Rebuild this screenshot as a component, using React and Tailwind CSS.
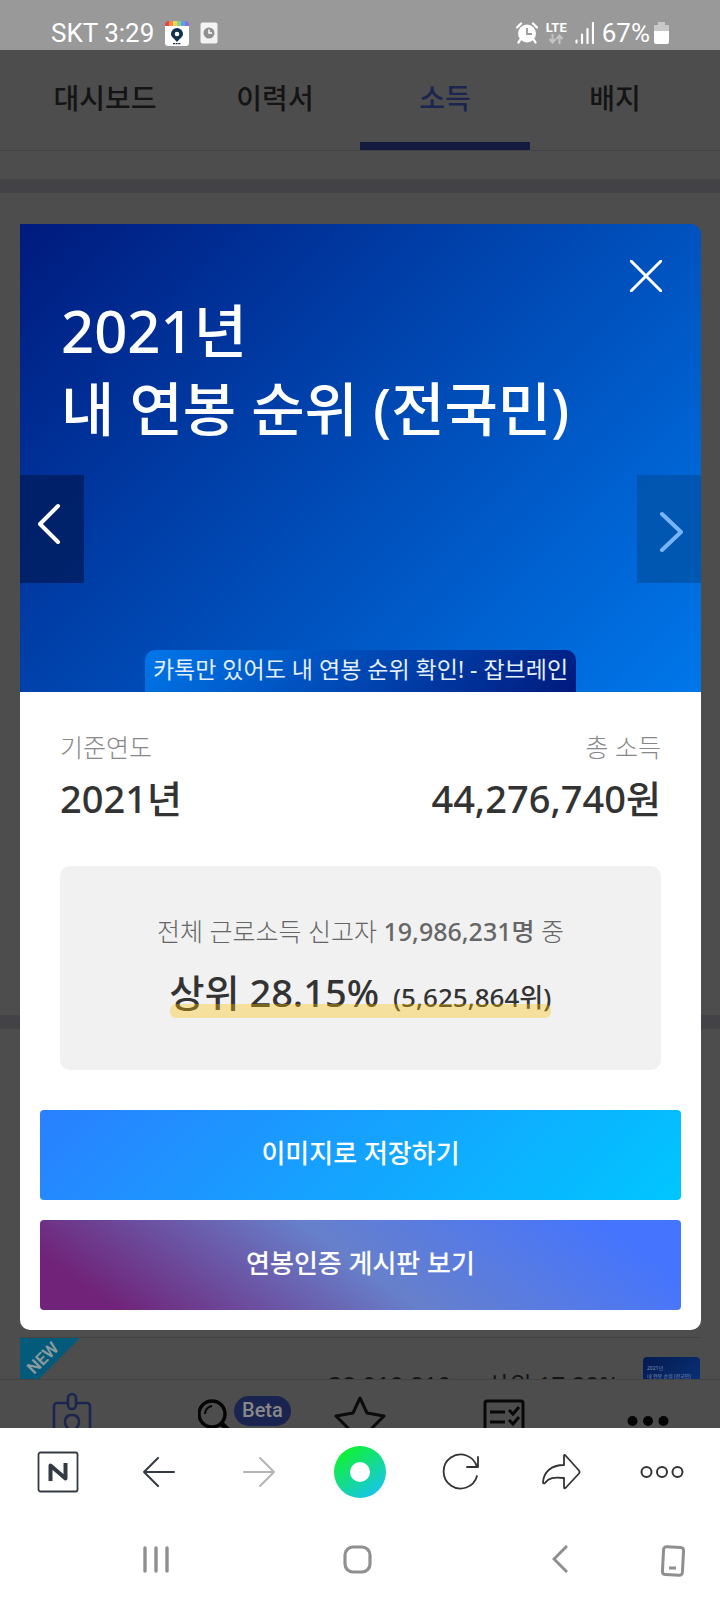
import React, { useState } from 'react';

const tabs = ['대시보드', '이력서', '소득', '배지'];

const StatusBar = () => (
  <header className="flex h-[50px] items-end justify-between bg-[#999] px-[51px] pb-[2px] font-['Roboto','Noto_Sans_CJK_KR',sans-serif] text-[26px] leading-[30px] text-white">
    <div className="flex items-center">
      <span>SKT 3:29</span>
      <svg className="ml-[10px] h-[26px] w-[26px]" viewBox="0 0 26 26">
        <rect x="1" y="4" width="24" height="22" rx="3" fill="#fff" />
        <path d="M1 6V4a4 4 0 0 1 4-3v5z" fill="#e04848" />
        <path d="M5 1h4v5H5z" fill="#ef8a4a" />
        <path d="M9 1h4v5H9z" fill="#efd25a" />
        <path d="M13 1h4v5h-4z" fill="#8fd07a" />
        <path d="M17 1h4v5h-4z" fill="#5aa0f0" />
        <path d="M21 1a4 4 0 0 1 4 3v2h-4z" fill="#8a70e0" />
        <path d="M13 8a6 6 0 0 0-6 6c0 3 3 4 6 8 3-4 6-5 6-8a6 6 0 0 0-6-6z" fill="#12304c" />
        <circle cx="13" cy="14" r="2.3" fill="#fff" />
        <path d="M9 23.6h8" stroke="#12304c" strokeWidth="1.4" strokeDasharray="2 .6" />
      </svg>
      <svg className="ml-[10px] h-[22px] w-[18px]" viewBox="0 0 18 22">
        <rect width="17" height="21" x=".5" y=".5" rx="2" fill="#f3f3f3" />
        <circle cx="9" cy="11" r="5.5" fill="#909090" />
        <path d="M9 7.5V11h3" stroke="#fff" strokeWidth="1.5" fill="none" />
      </svg>
    </div>
    <div className="flex items-center">
      <svg className="h-[22px] w-[22px]" viewBox="0 0 22 22">
        <circle cx="11" cy="11.5" r="9" fill="#fff" />
        <path d="M1 5.5L5 1.5M21 5.5L17 1.5M4 18L2.5 20.5M18 18l1.5 2.5" stroke="#fff" strokeWidth="2.4" strokeLinecap="round" />
        <path d="M11 6v6h5" stroke="#999" strokeWidth="1.8" fill="none" />
      </svg>
      <div className="ml-2 flex flex-col items-center">
        <span className="text-[13px] leading-[12px] font-bold">LTE</span>
        <svg className="h-[10px] w-[16px]" viewBox="0 0 16 10">
          <path d="M4.5 0v8M1.5 5l3 3.5 3-3.5M11.5 10V2M8.5 5l3-3.5 3 3.5" stroke="#c4c4c4" strokeWidth="2" fill="none" />
        </svg>
      </div>
      <svg className="ml-2 h-[22px] w-[19px]" viewBox="0 0 19 22">
        <path d="M1.5 18.5v2M7 12.5V21M12.5 7v14M18 1v20" stroke="#fff" strokeWidth="2.2" strokeLinecap="round" />
      </svg>
      <span className="ml-2">67%</span>
      <svg className="ml-1 h-[22px] w-[15px]" viewBox="0 0 15 22">
        <path d="M4 0h7v3h3a1 1 0 0 1 1 1v5H0V4a1 1 0 0 1 1-1h3z" fill="#c8c8c8" />
        <path d="M0 9h15v11a2 2 0 0 1-2 2H2a2 2 0 0 1-2-2z" fill="#fff" />
      </svg>
    </div>
  </header>
);

// モーダルの後ろにある暗くなったページ
const DimmedPage = () => (
  <div className="absolute inset-0 flex flex-col overflow-hidden bg-[#4d4d4d]">
    <nav className="grid h-[101px] shrink-0 grid-cols-4 border-b border-[#424246] px-5">
      {tabs.map(t => (
        <a
          key={t}
          href="#"
          className={`flex justify-center border-b-8 pt-7 text-[28px] leading-[40px] font-medium ${
            t === '소득' ? 'border-[#141b3e] text-[#1b254f]' : 'border-transparent text-[#141414]'
          }`}
        >
          {t}
        </a>
      ))}
    </nav>
    <div className="mt-7 h-[14px] shrink-0 bg-[#434347]" />
    <div className="flex-1" />
    <div className="h-[14px] shrink-0 bg-[#434347]" />
    <div className="h-[308px] shrink-0" />
    <div className="mx-5 flex h-[42px] shrink-0 overflow-hidden border-t border-[#444]">
      <svg className="h-[60px] w-[60px] shrink-0" viewBox="0 0 60 60">
        <path d="M0 0h60L0 60z" fill="#035a7a" />
        <text x="0" y="0" transform="translate(14 37) rotate(-45)" fontSize="17" fontWeight="600" fontFamily="Roboto, sans-serif" fill="#8a9a9f">NEW</text>
      </svg>
      <div className="mt-7 mr-6 flex flex-1 justify-end gap-9 text-[24px] leading-[38px] text-[#141414]">
        <span>38,919,810</span>
        <span>상위 17.88%</span>
      </div>
      <div className="mt-[19px] h-14 w-[57px] overflow-hidden rounded bg-linear-to-br from-[#051a50] to-[#083a85] px-1 pt-[7px] text-[5px] leading-[8px] whitespace-nowrap text-[#8090b0]">
        2021년
        <br />내 연봉 순위 (전국민)
      </div>
    </div>
    <nav className="grid h-[49px] shrink-0 grid-cols-5 overflow-hidden border-t border-[#424242]">
      <a href="#" aria-label="홈" className="flex justify-center pt-3">
        <svg className="h-[52px] w-[40px]" viewBox="0 0 40 52" fill="none" stroke="#1c2550" strokeWidth="2.6">
          <path d="M15 11H5a3 3 0 0 0-3 3v36h36V14a3 3 0 0 0-3-3H25" />
          <rect x="16" y="2" width="8" height="15" rx="4" />
          <path d="M20 23c-5 0-7 3-7 7s3 8 7 8 7-4 7-8-2-7-7-7z" />
        </svg>
      </a>
      <a href="#" className="relative flex justify-center pt-[14px]">
        <svg className="mt-1 h-[40px] w-[36px]" viewBox="0 0 36 40" fill="none" stroke="#050505" strokeWidth="3.4">
          <circle cx="14" cy="16" r="13" />
          <path d="M7 16a8 8 0 0 1 7-8" strokeWidth="2" />
          <path d="M24 26l9 9" strokeWidth="5" />
        </svg>
        <span className="absolute top-4 left-[90px] h-[30px] rounded-full bg-[#1a2450] px-2 font-['Roboto',sans-serif] text-[20px] leading-[28px] font-medium text-[#888]">Beta</span>
      </a>
      <a href="#" aria-label="즐겨찾기" className="flex justify-center pt-4">
        <svg className="h-[50px] w-[52px]" viewBox="0 0 52 50" fill="none" stroke="#0c0c0c" strokeWidth="3" strokeLinejoin="round">
          <path d="M26 2l7 15 17 3-12 12 3 16-15-7-15 7 3-16L2 20l17-3z" />
        </svg>
      </a>
      <a href="#" aria-label="목록" className="flex justify-center pt-[19px]">
        <svg className="h-[44px] w-[42px]" viewBox="0 0 42 44" fill="none" stroke="#080808" strokeWidth="3">
          <rect x="2" y="2" width="38" height="40" rx="2" />
          <path d="M7 13h15M7 23h15M26 11l4 4 6-7M26 21l4 4 6-7" />
        </svg>
      </a>
      <a href="#" aria-label="더보기" className="flex justify-center pt-9">
        <svg className="h-[10px] w-[42px]" viewBox="0 0 42 10" fill="#050505">
          <circle cx="5.5" cy="5" r="5" />
          <circle cx="21" cy="5" r="5" />
          <circle cx="36.5" cy="5" r="5" />
        </svg>
      </a>
    </nav>
  </div>
);

const RankModal = ({ onClose }) => (
  <section role="dialog" aria-label="내 연봉 순위" className="relative mt-[174px] mr-[19px] mb-[97px] ml-5">
    <div className="relative flex min-h-[468px] flex-col justify-between rounded-tr-[10px] bg-linear-[135deg] from-[#001a7d] via-[#004ab5] to-[#0077ea]">
      <button onClick={onClose} aria-label="닫기" className="absolute top-9 right-[39px]">
        <svg className="h-8 w-8" viewBox="0 0 32 32" stroke="#fff" strokeWidth="3" strokeLinecap="round">
          <path d="M1 1l30 30M31 1L1 31" />
        </svg>
      </button>
      <h1 className="px-[41px] pt-[68px] text-[58px] leading-[78px] font-medium text-white">
        2021년
        <br />내 연봉 순위 (전국민)
      </h1>
      <button aria-label="이전" className="absolute top-[251px] left-0 flex h-[108px] w-16 justify-center bg-[#001d5e]/80 pt-7 pr-1">
        <svg className="h-[42px] w-6" viewBox="0 0 24 42" fill="none" stroke="#fff" strokeWidth="4" strokeLinecap="round" strokeLinejoin="round">
          <path d="M20 3L2 21l18 18" />
        </svg>
      </button>
      <button aria-label="다음" className="absolute top-[251px] right-0 flex h-[108px] w-16 justify-end bg-[#0052a8]/80 pt-9 pr-[18px]">
        <svg className="h-[42px] w-6" viewBox="0 0 24 42" fill="none" stroke="#77b4fa" strokeWidth="4" strokeLinecap="round" strokeLinejoin="round">
          <path d="M3 3l19 18L3 39" />
        </svg>
      </button>
      <p className="self-center rounded-t-[10px] bg-linear-[135deg] from-[#0077ea] via-[#0048b4] to-[#001a7d] px-2 pb-1 text-[23px] leading-[38px] text-[#e4f0ff]">
        카톡만 있어도 내 연봉 순위 확인! - 잡브레인
      </p>
    </div>

    <div className="rounded-b-[10px] bg-white">
      <dl className="flex justify-between px-10 pt-9">
        <div>
          <dt className="text-[25px] leading-[38px] font-light text-[#888]">기준연도</dt>
          <dd className="mt-1 text-[38px] leading-[56px] font-medium text-[#333]">2021년</dd>
        </div>
        <div className="text-right">
          <dt className="text-[25px] leading-[38px] font-light text-[#888]">총 소득</dt>
          <dd className="mt-1 text-[38px] leading-[56px] font-medium text-[#333]">44,276,740원</dd>
        </div>
      </dl>

      <div className="mx-10 mt-10 flex flex-col items-center rounded-[10px] bg-[#f1f1f1] pt-[46px] pb-[50px] text-[#666]">
        <p className="text-[25px] leading-[38px] font-light">
          전체 근로소득 신고자 <b className="font-medium">19,986,231명</b> 중
        </p>
        <p className="relative mt-[14px] text-[38px] leading-[56px] font-medium text-[#333]">
          상위 28.15% <span className="ml-1 text-[26px] leading-none">(5,625,864위)</span>
          <span className="absolute bottom-[2px] left-0 h-[14px] w-full rounded-[6px] bg-[#ffbf00]/35" />
        </p>
      </div>

      <div className="flex flex-col gap-5 p-5 pt-10 text-[26px] leading-[38px] font-medium text-white">
        <button className="rounded bg-linear-[135deg] from-[#2a80ff] to-[#00c6ff] pt-[24px] pb-[28px]">이미지로 저장하기</button>
        <button className="rounded bg-linear-[36deg] from-[#702378] from-10% via-[#6780cb] via-50% to-[#4575ff] to-90% pt-[24px] pb-[28px]">연봉인증 게시판 보기</button>
      </div>
    </div>
  </section>
);

const BrowserBar = () => (
  <nav className="grid h-[87px] grid-cols-7 place-items-center bg-white px-2">
    <button aria-label="네이버">
      <svg className="h-[42px] w-[42px]" viewBox="0 0 42 42" fill="none" stroke="#343a43">
        <rect x="1.5" y="1.5" width="39" height="39" rx="2" strokeWidth="1.8" />
        <path d="M13.5 30V14.5L28.5 27.5V12" strokeWidth="4" strokeLinejoin="round" />
      </svg>
    </button>
    <button aria-label="뒤로">
      <svg className="h-8 w-8" viewBox="0 0 32 32" fill="none" stroke="#343a43" strokeWidth="2" strokeLinecap="round" strokeLinejoin="round">
        <path d="M31 16H1M15 2L1 16l14 14" />
      </svg>
    </button>
    <button aria-label="앞으로">
      <svg className="h-8 w-8" viewBox="0 0 32 32" fill="none" stroke="#b5b5b5" strokeWidth="2" strokeLinecap="round" strokeLinejoin="round">
        <path d="M1 16h30M17 2l14 14-14 14" />
      </svg>
    </button>
    <button aria-label="그린닷" className="flex h-[52px] w-[52px] items-center justify-center rounded-full bg-linear-[145deg] from-[#10f038] from-15% to-[#18c4ee] to-90%">
      <span className="h-5 w-5 rounded-full bg-white" />
    </button>
    <button aria-label="새로고침">
      <svg className="h-[38px] w-[38px]" viewBox="0 0 38 38" fill="none" stroke="#333" strokeWidth="1.8" strokeLinecap="round" strokeLinejoin="round">
        <path d="M35 23A17 17 0 1 1 35 14M36 4v10H25" />
      </svg>
    </button>
    <button aria-label="공유">
      <svg className="h-[38px] w-[40px]" viewBox="0 0 40 38" fill="none" stroke="#333" strokeWidth="1.8" strokeLinejoin="round">
        <path d="M23 3q0-2 1.5-.5L38 17.5q1 1.5 0 3L24.500 35q-1.5 1-1.5-1V25c-10-1-15-.5-19 5-1.5 1-2 0-2-1C3 19 10 12 23 12z" />
      </svg>
    </button>
    <button aria-label="더보기">
      <svg className="h-4 w-[44px]" viewBox="0 0 44 16" fill="none" stroke="#333" strokeWidth="2">
        <circle cx="6.5" cy="8" r="5" />
        <circle cx="22" cy="8" r="5" />
        <circle cx="37.5" cy="8" r="5" />
      </svg>
    </button>
  </nav>
);

const SystemBar = () => (
  <nav className="grid h-[85px] grid-cols-[170px_202px_1fr_74px_94px] bg-white pt-[30px] text-[#8f8f8f]">
    <button aria-label="최근 앱" className="flex justify-end">
      <svg className="h-7 w-7" viewBox="0 0 28 28" stroke="currentColor" strokeWidth="3.4" strokeLinecap="round">
        <path d="M3 3v23M14 3v23M25 3v23" />
      </svg>
    </button>
    <button aria-label="홈" className="flex justify-end">
      <svg className="h-[29px] w-[29px]" viewBox="0 0 29 29" fill="none" stroke="currentColor" strokeWidth="3.2">
        <rect x="2" y="2" width="25" height="25" rx="8" />
      </svg>
    </button>
    <span />
    <button aria-label="뒤로" className="flex justify-start">
      <svg className="h-7 w-4" viewBox="0 0 16 28" fill="none" stroke="currentColor" strokeWidth="3">
        <path d="M15 1L2 14l13 13" />
      </svg>
    </button>
    <button aria-label="화면 회전" className="flex justify-center">
      <svg className="h-8 w-6" viewBox="0 0 24 32" fill="none" stroke="currentColor" strokeWidth="3">
        <rect x="2" y="2" width="20" height="28" rx="3" transform="rotate(3 12 16)" />
        <path d="M8 23h7" />
      </svg>
    </button>
  </nav>
);

const App = () => {
  const [open, setOpen] = useState(true);

  return (
    <div className="flex min-h-screen flex-col bg-white font-['Noto_Sans','Noto_Sans_CJK_KR',sans-serif]">
      <StatusBar />
      <main className="relative min-h-[1378px] flex-1">
        <DimmedPage />
        {open && <RankModal onClose={() => setOpen(false)} />}
      </main>
      <BrowserBar />
      <SystemBar />
    </div>
  );
};

export default App;
